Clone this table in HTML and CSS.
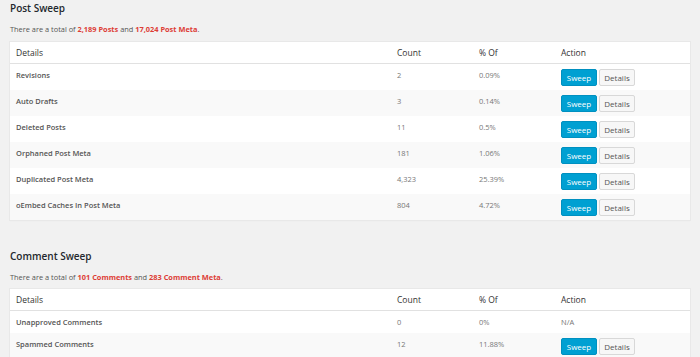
FILE: index.html
```html
<!DOCTYPE html>
<html>
<head>
<meta charset="utf-8">
<link rel="stylesheet" href="styles.css">
</head>
<body>
<div class="wrap">
  <section class="sweep">
    <h2 class="sweep-title">Post Sweep</h2>
    <p class="sweep-total">There are a total of <strong>2,189 Posts</strong> and <strong>17,024 Post Meta</strong>.</p>
    <table class="sweep-table">
      <colgroup><col class="c-details"><col class="c-count"><col class="c-pct"><col class="c-action"></colgroup>
      <thead>
        <tr><th>Details</th><th>Count</th><th>% Of</th><th>Action</th></tr>
      </thead>
      <tbody>
        <tr><td class="name">Revisions</td><td>2</td><td>0.09%</td><td><span class="btn btn-sweep">Sweep</span><span class="btn btn-details">Details</span></td></tr>
        <tr><td class="name">Auto Drafts</td><td>3</td><td>0.14%</td><td><span class="btn btn-sweep">Sweep</span><span class="btn btn-details">Details</span></td></tr>
        <tr><td class="name">Deleted Posts</td><td>11</td><td>0.5%</td><td><span class="btn btn-sweep">Sweep</span><span class="btn btn-details">Details</span></td></tr>
        <tr><td class="name">Orphaned Post Meta</td><td>181</td><td>1.06%</td><td><span class="btn btn-sweep">Sweep</span><span class="btn btn-details">Details</span></td></tr>
        <tr><td class="name">Duplicated Post Meta</td><td>4,323</td><td>25.39%</td><td><span class="btn btn-sweep">Sweep</span><span class="btn btn-details">Details</span></td></tr>
        <tr><td class="name">oEmbed Caches In Post Meta</td><td>804</td><td>4.72%</td><td><span class="btn btn-sweep">Sweep</span><span class="btn btn-details">Details</span></td></tr>
      </tbody>
    </table>
  </section>
  <section class="sweep sweep-comments">
    <h2 class="sweep-title">Comment Sweep</h2>
    <p class="sweep-total">There are a total of <strong>101 Comments</strong> and <strong>283 Comment Meta</strong>.</p>
    <table class="sweep-table">
      <colgroup><col class="c-details"><col class="c-count"><col class="c-pct"><col class="c-action"></colgroup>
      <thead>
        <tr><th>Details</th><th>Count</th><th>% Of</th><th>Action</th></tr>
      </thead>
      <tbody>
        <tr><td class="name">Unapproved Comments</td><td>0</td><td>0%</td><td>N/A</td></tr>
        <tr><td class="name">Spammed Comments</td><td>12</td><td>11.88%</td><td><span class="btn btn-sweep">Sweep</span><span class="btn btn-details">Details</span></td></tr>
      </tbody>
    </table>
  </section>
</div>
</body>
</html>
```
FILE: styles.css
```css
html, body {
  margin: 0;
  padding: 0;
  background: #f1f1f1;
  font-family: "Open Sans", "Noto Sans", sans-serif;
  color: #444;
}
.wrap {
  padding: 0 10px;
}
.sweep-title {
  margin: 0;
  padding-top: 1px;
  font-size: 10px;
  line-height: 14px;
  font-weight: 600;
  color: #23282d;
}
.sweep-total {
  margin: 8px 0 7px;
  font-size: 7.4px;
  line-height: 12px;
  color: #555;
}
.sweep-total strong {
  color: #dd3d36;
  font-weight: 700;
}
.sweep-comments {
  margin-top: 28px;
}
.sweep-comments .sweep-total {
  margin-bottom: 6px;
}
.sweep-table {
  width: 680px;
  border-collapse: collapse;
  table-layout: fixed;
  background: #fff;
  box-shadow: 0 1px 1px rgba(0,0,0,0.06);
  outline: 1px solid #e8e8e8;
}
.c-details { width: 381px; }
.c-count { width: 82px; }
.c-pct { width: 82px; }
.c-action { width: 135px; }
.sweep-table th {
  text-align: left;
  font-weight: 400;
  font-size: 8.5px;
  line-height: 13px;
  color: #333;
  padding: 4px 6px 4px;
  border-bottom: 1px solid #e1e1e1;
}
.sweep-table td {
  vertical-align: top;
  font-size: 7.5px;
  line-height: 13px;
  height: 13px;
  color: #777;
  padding: 5px 6px 4px;
}
.sweep-table td.name {
  font-weight: 600;
  color: #555;
}
.sweep-table tbody tr:nth-child(even) {
  background: #f9f9f9;
}
.btn {
  display: inline-block;
  box-sizing: border-box;
  height: 17px;
  width: 36px;
  line-height: 15px;
  text-align: center;
  font-size: 8px;
  border-radius: 2px;
  vertical-align: top;
}
.btn-sweep {
  background: #00a0d2;
  border: 1px solid #0090c0;
  color: #fff;
  margin-right: 2px;
}
.btn-details {
  background: #f7f7f7;
  border: 1px solid #d8d8d8;
  color: #555;
}
```
